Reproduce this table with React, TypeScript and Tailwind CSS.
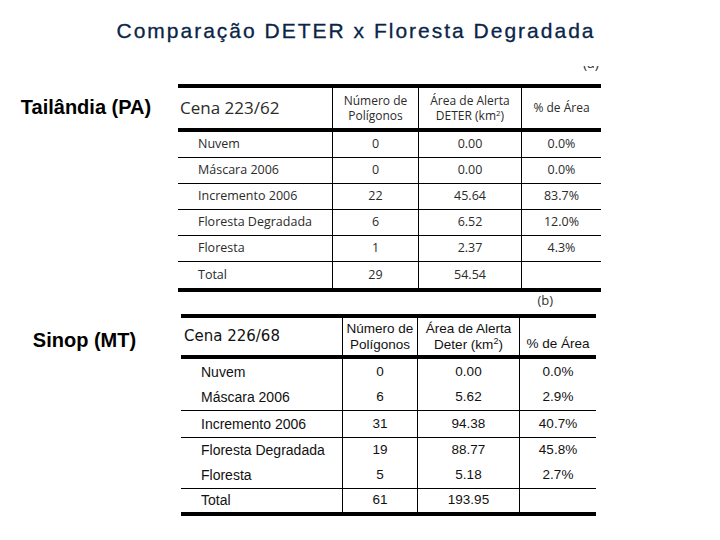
import React from "react";

const t1Rows = [
  ["Nuvem", "0", "0.00", "0.0%"],
  ["Máscara 2006", "0", "0.00", "0.0%"],
  ["Incremento 2006", "22", "45.64", "83.7%"],
  ["Floresta Degradada", "6", "6.52", "12.0%"],
  ["Floresta", "1", "2.37", "4.3%"],
];

const t2Rows: { c: string[]; h: string; b: boolean }[] = [
  { c: ["Nuvem", "0", "0.00", "0.0%"], h: "h-[26px]", b: false },
  { c: ["Máscara 2006", "6", "5.62", "2.9%"], h: "h-[26px]", b: true },
  { c: ["Incremento 2006", "31", "94.38", "40.7%"], h: "h-[27px]", b: true },
  { c: ["Floresta Degradada", "19", "88.77", "45.8%"], h: "h-[25px]", b: false },
  { c: ["Floresta", "5", "5.18", "2.7%"], h: "h-[26px]", b: true },
];

const f1 = { fontFamily: '"Open Sans", "Noto Sans", sans-serif' };
const f2 = { fontFamily: '"Liberation Sans", Arial, sans-serif' };

export default function App() {
  return (
    <div className="w-[720px] h-[540px] bg-white flex flex-col overflow-hidden" style={f2}>
      <div className="pt-[19px] pr-[8px] text-center text-[21px] leading-[24px] tracking-[2px] text-[#0a2548] h-[43px] [-webkit-text-stroke:0.3px_#0a2548]">
        Comparação DETER x Floresta Degradada
      </div>

      {/* Section 1 */}
      <div className="mt-[23px] flex">
        <div className="w-[178px] pt-[29px] pr-[6px] text-center text-[20px] leading-[24px] font-bold text-black">
          Tailândia (PA)
        </div>
        <div className="w-[423px] flex flex-col" style={f1}>
          <div className="h-[18px] overflow-hidden flex justify-end pr-[2px]">
            <span className="text-[14px] leading-[16px] mt-[-11px] text-[#333]">(a)</span>
          </div>
          <div className="border-t-4 border-b-4 border-black text-[#2b2b2b]">
            <div className="grid grid-cols-[154px_86px_103px_80px] h-[44px] border-b-4 border-black">
              <div className="flex items-center pl-[2px] text-[17px]">Cena 223/62</div>
              <div className="border-l border-black flex flex-col items-center justify-center text-[12px] leading-[15px]">
                <span>Número de</span>
                <span>Polígonos</span>
              </div>
              <div className="border-l border-black flex flex-col items-center justify-center text-[12px] leading-[15px]">
                <span>Área de Alerta</span>
                <span>
                  DETER (km<sup className="text-[8px]">2</sup>)
                </span>
              </div>
              <div className="border-l border-black flex items-center justify-center text-[12px]">% de Área</div>
            </div>
            {t1Rows.map((r) => (
              <div key={r[0]} className="grid grid-cols-[154px_86px_103px_80px] h-[26px] border-b border-black text-[12.5px]">
                <div className="flex items-center pl-[20px]">{r[0]}</div>
                <div className="border-l border-black flex items-center justify-center">{r[1]}</div>
                <div className="border-l border-black flex items-center justify-center">{r[2]}</div>
                <div className="border-l border-black flex items-center justify-center">{r[3]}</div>
              </div>
            ))}
            <div className="grid grid-cols-[154px_86px_103px_80px] h-[26px] text-[12.5px]">
              <div className="flex items-center pl-[20px]">Total</div>
              <div className="border-l border-black flex items-center justify-center">29</div>
              <div className="border-l border-black flex items-center justify-center">54.54</div>
              <div className="border-l border-black"></div>
            </div>
          </div>
          <div className="h-[16px] flex justify-end pr-[48px] text-[13px] leading-[16px] text-[#333]">(b)</div>
        </div>
      </div>

      {/* Section 2 */}
      <div className="mt-[6px] flex">
        <div className="w-[181px] pt-[14px] pr-[12px] text-center text-[20px] leading-[24px] font-bold text-black">
          Sinop (MT)
        </div>
        <div className="w-[415px] border-t-4 border-b-4 border-black text-[#111]">
          <div className="grid grid-cols-[161px_75px_102px_77px] h-[41px] border-b-4 border-black">
            <div className="flex items-center pl-[3px] text-[15px]" style={{ fontFamily: '"DejaVu Sans", sans-serif' }}>
              Cena 226/68
            </div>
            <div className="border-l border-black flex flex-col items-center justify-center text-[13.5px] leading-[16px]">
              <span>Número de</span>
              <span>Polígonos</span>
            </div>
            <div className="border-l border-black flex flex-col items-center justify-center text-[13.5px] leading-[16px]">
              <span>Área de Alerta</span>
              <span>
                Deter (km<sup className="text-[9px]">2</sup>)
              </span>
            </div>
            <div className="border-l border-black flex items-end justify-center pb-[3px] text-[13.5px] leading-[16px]">% de Área</div>
          </div>
          {t2Rows.map((r) => (
            <div
              key={r.c[0]}
              className={`grid grid-cols-[161px_75px_102px_77px] text-[13.5px] ${r.h} ${r.b ? "border-b border-black" : ""}`}
            >
              <div className="flex items-center pl-[20px] text-[14px]">{r.c[0]}</div>
              <div className="border-l border-black flex items-center justify-center">{r.c[1]}</div>
              <div className="border-l border-black flex items-center justify-center">{r.c[2]}</div>
              <div className="border-l border-black flex items-center justify-center">{r.c[3]}</div>
            </div>
          ))}
          <div className="grid grid-cols-[161px_75px_102px_77px] h-[23px] text-[13.5px]">
            <div className="flex items-center pl-[20px] text-[14px]">Total</div>
            <div className="border-l border-black flex items-center justify-center">61</div>
            <div className="border-l border-black flex items-center justify-center">193.95</div>
            <div className="border-l border-black"></div>
          </div>
        </div>
      </div>
    </div>
  );
}
